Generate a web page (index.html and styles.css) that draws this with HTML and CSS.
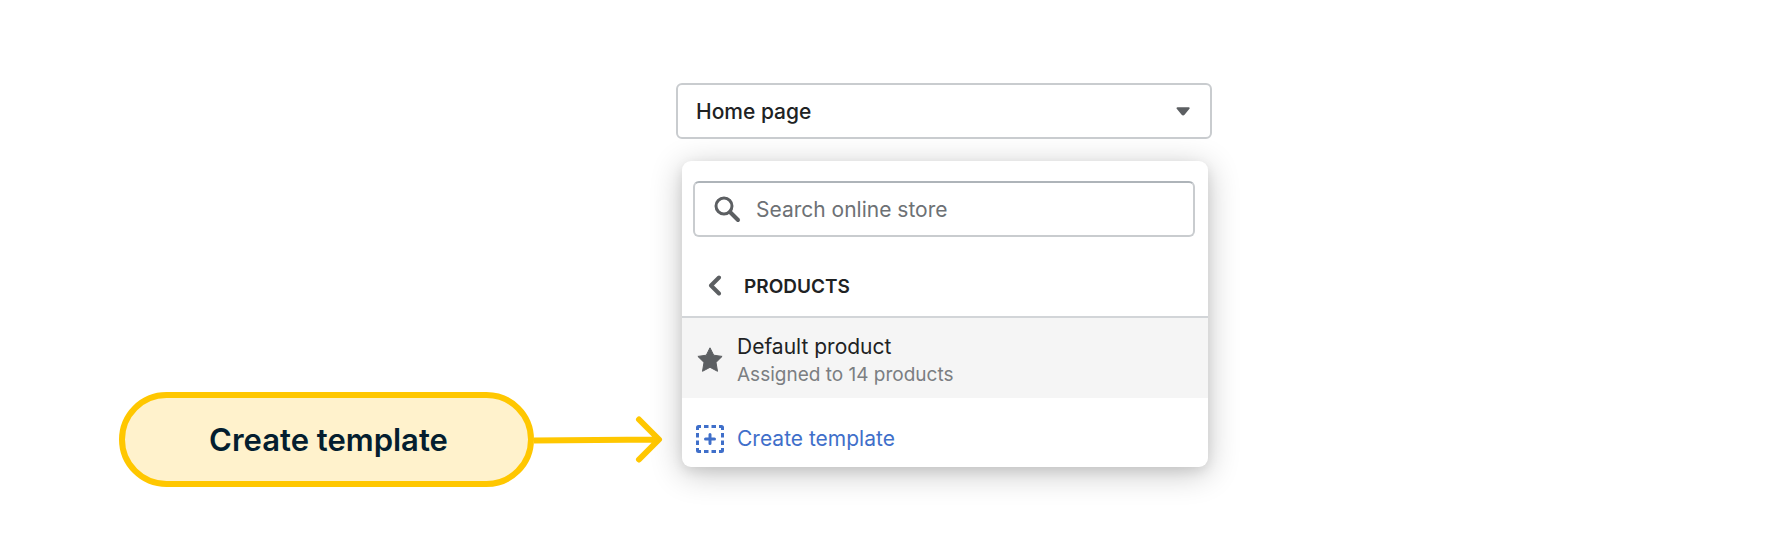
FILE: index.html
```html
<!DOCTYPE html>
<html lang="en">
<head>
    <meta charset="UTF-8">
    <meta name="viewport" content="width=device-width, initial-scale=1">
    <title>Create template</title>
    <link rel="stylesheet" href="styles.css">
</head>
<body>
    <main class="page">
        <div class="callout">
            <div class="callout-label">Create template</div>
            <svg class="callout-arrow" width="130" height="48" viewBox="0 0 130 48" aria-hidden="true">
                <path d="M0 24.5L124 23.5M105 3.5l20 20-20 20" />
            </svg>
        </div>

        <div class="picker">
            <div class="page-select">
                <select aria-label="Page">
                    <option>Home page</option>
                </select>
                <svg class="caret" width="14" height="10" viewBox="0 0 14 10" aria-hidden="true">
                    <path d="M1.5 2.2h11.2L7.8 8q-.7.8-1.4 0z" />
                </svg>
            </div>

            <div class="panel">
                <label class="search">
                    <svg width="28" height="28" viewBox="0 0 28 28" aria-hidden="true">
                        <circle cx="11" cy="11" r="8" />
                        <path d="M17 17l8 8" />
                    </svg>
                    <input type="text" placeholder="Search online store" aria-label="Search online store">
                </label>

                <button type="button" class="back">
                    <svg width="14" height="22" viewBox="0 0 14 22" aria-hidden="true">
                        <path d="M11 2.5L3 10.500l8 8" />
                    </svg>
                    <span>Products</span>
                </button>

                <button type="button" class="row selected">
                    <svg class="star" width="28" height="28" viewBox="0 0 28 28" aria-hidden="true">
                        <path d="M14 1.800L17.700 9.200 26.100 10.400 20 16.400 21.500 25.300 14 21.300 6.500 25.300 8 16.400 1.900 10.400 10.300 9.200z" />
                    </svg>
                    <span class="row-text">
                        <span class="row-title">Default product</span>
                        <span class="row-note">Assigned to 14 products</span>
                    </span>
                </button>

                <button type="button" class="row create">
                    <svg class="add" width="28" height="28" viewBox="0 0 28 28" aria-hidden="true">
                        <path d="M1.5 5V2.5q0-1 1-1H5M8 1.5h4.5M15.5 1.5h4.5M23 1.5h2.5q1 0 1 1V5M26.5 8v4.5M26.5 15.5v4.5M26.5 23v2.5q0 1-1 1H23M20 26.5h-4.5M12.5 26.5H8M5 26.5H2.5q-1 0-1-1V23M1.5 20v-4.5M1.5 12.5V8" />
                        <path class="plus" d="M14 9.5v9M9.5 14h9" />
                    </svg>
                    <span class="row-title">Create template</span>
                </button>
            </div>
        </div>
    </main>
</body>
</html>
```
FILE: styles.css
```css
* {
    box-sizing: border-box;
}
body {
    margin: 0;
    background: #fff;
    color: #202223;
    font-family: Inter, 'Liberation Sans', sans-serif;
    font-size: 21px;
}
button, input, select {
    font: inherit;
    color: inherit;
}
svg {
    flex: none;
    fill: none;
    stroke: #5c5f62;
}
.page {
    display: grid;
    grid-template-columns: 557fr 536fr 459fr;
    padding: 83px 119px 72px;
}

/* callout */
.callout {
    display: flex;
    align-items: center;
    align-self: end;
    padding-right: 12px;
}
.callout-label {
    flex: 1;
    padding: 24px 20px 24px 24px;
    border: 6px solid #ffc700;
    border-radius: 48px;
    background: #fff2cc;
    color: #041e2f;
    font-size: 31px;
    font-weight: 600;
    line-height: 35px;
    text-align: center;
}
.callout-arrow {
    stroke: #ffc700;
    stroke-width: 6;
    stroke-linecap: round;
    stroke-linejoin: round;
}

/* page select */
.picker {
    padding-bottom: 20px;
}
.page-select {
    display: grid;
    align-items: center;
}
.page-select select,
.page-select .caret {
    grid-area: 1 / 1;
}
.page-select select {
    appearance: none;
    width: 100%;
    height: 56px;
    padding: 0 18px;
    border: 2px solid #c9cccf;
    border-radius: 6px;
    background: #fff;
    font-weight: 500;
}
.page-select .caret {
    justify-self: end;
    margin-right: 22px;
    fill: #5c5f62;
    stroke-width: 2;
    stroke-linejoin: round;
    pointer-events: none;
}

/* dropdown panel */
.panel {
    margin: 22px 4px 0 6px;
    padding-top: 20px;
    border-radius: 9px;
    background: #fff;
    box-shadow: 0 6px 32px rgba(0, 0, 0, 0.24), 0 4px 12px rgba(0, 0, 0, 0.08);
    overflow: hidden;
}
.search {
    display: flex;
    align-items: center;
    gap: 15px;
    height: 56px;
    margin: 0 13px 0 11px;
    padding: 0 18px;
    border: 2px solid #c9cccf;
    border-top-color: #aeb4b9;
    border-radius: 6px;
}
.search svg {
    stroke-width: 3;
    stroke-linecap: round;
}
.search path {
    stroke-width: 4;
}
.search input {
    flex: 1;
    min-width: 0;
    padding: 0;
    border: 0;
    outline: 0;
    background: none;
}
.search input::placeholder {
    color: #6d7175;
    opacity: 1;
}
.back {
    display: flex;
    align-items: center;
    gap: 22px;
    width: 100%;
    height: 81px;
    padding: 19px 26px 0;
    border: 0;
    border-bottom: 2px solid #d2d5d8;
    background: none;
    font-size: 19px;
    font-weight: 600;
    text-transform: uppercase;
    cursor: pointer;
}
.back svg {
    stroke-width: 4;
    stroke-linecap: round;
    stroke-linejoin: round;
}
.row {
    display: flex;
    align-items: center;
    gap: 13px;
    width: 100%;
    padding: 14px 14px 11px;
    border: 0;
    background: none;
    text-align: left;
    cursor: pointer;
}
.row-text {
    display: flex;
    flex-direction: column;
}
.row-title {
    line-height: 30px;
}
.row-note {
    color: #7b7e82;
    font-size: 19px;
    line-height: 25px;
}
.selected {
    background: #f5f5f5;
}
.star {
    fill: #5c5f62;
    stroke-linejoin: round;
}
.create {
    padding: 26px 14px 13px;
    color: #3f6fca;
}
.add {
    stroke: #3f6fca;
    stroke-width: 3;
}
.plus {
    stroke-linecap: round;
}
```
